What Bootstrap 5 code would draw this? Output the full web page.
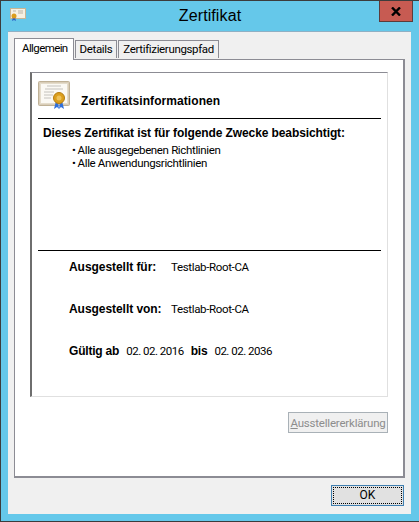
<!DOCTYPE html>
<html lang="de">
<head>
  <meta charset="UTF-8"/>
  <meta name="viewport" content="width=device-width, initial-scale=1.0"/>
  <title>Zertifikat</title>
  <link href="https://cdn.jsdelivr.net/npm/bootstrap@5.3.3/dist/css/bootstrap.min.css" rel="stylesheet"/>
  <style>
    html, body { height: 522px; overflow: hidden; }
    body { font-family: Roboto, "Liberation Sans", Arial, sans-serif; font-size: 11.5px; letter-spacing: -0.35px; color: #000; background: #65c8ea; }
    b { font-family: "Liberation Sans", Arial, sans-serif; }
    .win { height: 522px; border: 1px solid #3c3c3c; border-right: 0; background: #65c8ea; position: relative; padding: 0 8px 7px 7px; }
    .win-title { height: 30px; }
    .win-icon { margin-left: 2px; margin-top: 5px; }
    .win-name { font-family: "Liberation Sans", Arial, sans-serif; font-size: 16px; letter-spacing: 0.1px; line-height: 30px; padding-right: 17px; }
    .win-close { position: absolute; top: 0; right: 6px; width: 34px; height: 21px; background: #c75b52; border: 1px solid #5c3b3b; border-top: 0; padding: 0; }
    .dlg { height: 483px; background: #f0f0f0; border-top: 1px solid #8fb0c4; padding: 6px 6px 0 6px; }
    .tabs-row { height: 21px; align-items: flex-end; gap: 1px; position: relative; z-index: 1; }
    .tab-item { border: 1px solid #8c8c94; border-bottom: 0; background: #f0f0f0; height: 18px; line-height: 17px; padding: 0 4px; margin-bottom: 1px; }
    .tab-item.on { background: #fff; height: 22px; line-height: 19px; margin-bottom: -1px; padding: 0 5px 0 7px; letter-spacing: -0.6px; }
    .tab-page { height: 419px; background: #fff; border: 1px solid #8c8c94; border-width: 1px 2px 2px 1px; padding: 12px 15px 0 15px; }
    .cert-box { height: 325px; border: 1px solid #e0e0e0; border-top-color: #8c8c94; border-left: 2px solid #6e6e6e; padding: 0 6px; }
    .cert-head { height: 46px; gap: 11px; border-bottom: 1px solid #000; }
    .cert-head b { font-size: 12px; letter-spacing: 0.08px; margin-top: 10px; }
    .purpose { height: 132px; padding-left: 5px; padding-top: 7px; border-bottom: 1px solid #000; line-height: 14px; }
    .purpose b { font-size: 12px; letter-spacing: -0.1px; }
    .purpose ul { margin: 4px 0 0 0; padding-left: 29px; line-height: 13px; list-style: none; }
    .purpose li::before { content: "•"; margin-right: 2px; }
    .facts { padding: 9px 0 0 31px; }
    .fact-row { height: 42px; line-height: 14px; }
    .fact-row b { width: 102px; font-size: 12px; letter-spacing: -0.05px; }
    .validity { gap: 7px; }
    .validity span { letter-spacing: -0.5px; }
    .fact-row.validity b { width: auto; letter-spacing: -0.2px; }
    .actions { padding-top: 15px; }
    .btn-issuer:disabled { width: 100px; height: 21px; padding: 0; font-size: 11.5px; letter-spacing: -0.2px; line-height: 18px; color: #8d8d8d; background: #f0f0f0; border: 1px solid #a9b1b7; border-radius: 0; opacity: 1; }
    .footer-row { padding: 7px 1px 0 0; }
    .btn-ok { width: 73px; height: 21px; padding: 0; font-size: 12px; letter-spacing: 0; line-height: 17px; color: #000; background: #e1e1e1; border: 1px solid #3f7fb0; border-radius: 0; outline: 1px dotted #000; outline-offset: -3px; }
  </style>
</head>
<body>
  <div class="win">
    <div class="win-title d-flex align-items-start">
      <svg class="win-icon" width="16" height="16" viewBox="0 0 16 16">
        <rect x="0.5" y="2.5" width="15" height="10" fill="#f6f0e2" stroke="#c9b592"/>
        <path d="M8 5h5M8 7h5M3 5h3" stroke="#b9b3a6"/>
        <path d="M3 11l-1 4 2-1 2 1-1-4z" fill="#2f62c8"/>
        <circle cx="4" cy="10" r="2.5" fill="#dc9d1c"/>
      </svg>
      <div class="win-name flex-grow-1 text-center">Zertifikat</div>
    </div>
    <button class="win-close d-flex align-items-center justify-content-center" type="button" aria-label="Schließen">
      <svg width="10" height="9" viewBox="0 0 10 9"><path d="M1 0.5L9 8.5M9 0.5L1 8.5" stroke="#000" stroke-width="2.4" fill="none"/></svg>
    </button>
    <div class="dlg">
      <ul class="nav tabs-row">
        <li class="tab-item on">Allgemein</li>
        <li class="tab-item">Details</li>
        <li class="tab-item">Zertifizierungspfad</li>
      </ul>
      <div class="tab-page">
        <div class="cert-box">
          <div class="cert-head d-flex align-items-center">
            <svg width="32" height="29" viewBox="0 0 32 29">
              <rect x="0.5" y="0.5" width="31" height="24" rx="1" fill="#d9cdb8" stroke="#bfb196"/>
              <rect x="2.5" y="2.5" width="27" height="20" fill="#fbf9f4" stroke="#e4dccb"/>
              <path d="M9 5h14M7 8h18M6 11h10M6 14h9M6 17h7" stroke="#c4c2bd"/>
              <path d="M18 20l-2 8 3-2 2 2 1-7zM24 20l2 8-3-2-2 2-1-7z" fill="#2f6fdc"/>
              <circle cx="21" cy="17" r="5.5" fill="#dc9f1d" stroke="#b57d12"/>
              <circle cx="21" cy="17" r="2.5" fill="#eec25a"/>
            </svg>
            <b>Zertifikatsinformationen</b>
          </div>
          <div class="purpose">
            <b>Dieses Zertifikat ist für folgende Zwecke beabsichtigt:</b>
            <ul>
              <li>Alle ausgegebenen Richtlinien</li>
              <li>Alle Anwendungsrichtlinien</li>
            </ul>
          </div>
          <div class="facts">
            <div class="fact-row d-flex align-items-baseline"><b>Ausgestellt für:</b><span>Testlab-Root-CA</span></div>
            <div class="fact-row d-flex align-items-baseline"><b>Ausgestellt von:</b><span>Testlab-Root-CA</span></div>
            <div class="fact-row d-flex align-items-baseline validity"><b>Gültig ab</b><span>02. 02. 2016</span><b>bis</b><span>02. 02. 2036</span></div>
          </div>
        </div>
        <div class="actions d-flex justify-content-end">
          <button class="btn btn-issuer" type="button" disabled><u>A</u>usstellererklärung</button>
        </div>
      </div>
      <div class="footer-row d-flex justify-content-end">
        <button class="btn btn-ok" type="button">OK</button>
      </div>
    </div>
  </div>
</body>
</html>
